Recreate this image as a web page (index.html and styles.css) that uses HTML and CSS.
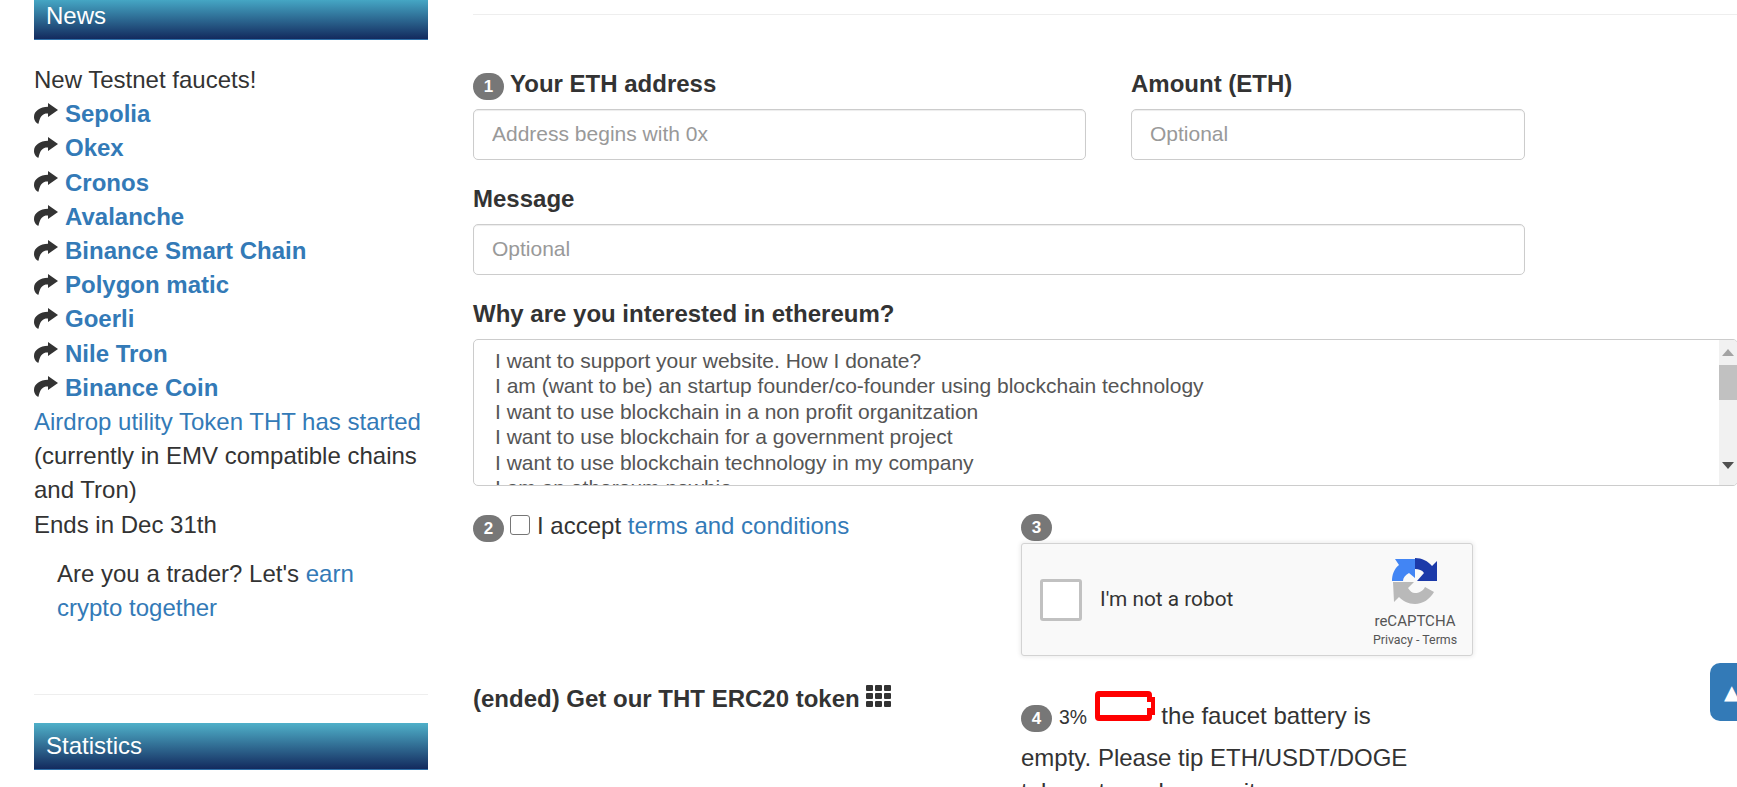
FILE: index.html
```html
<!DOCTYPE html>
<html>
<head>
<meta charset="utf-8" />
<title>Ethereum faucet</title>
<link rel="stylesheet" href="styles.css">
</head>
<body>
<div class="page">
	<div class="side">
		<h3 class="side-title side-title-news">News</h3>
		<div class="news">
			<p>New Testnet faucets!</p>
			<p class="net"><svg class="arrow" viewBox="0 0 24 21"><path d="M14 0 24 7 14 14V10.5C9.5 10.2 6 12.5 4.5 20.8 1.5 20 0 16.5 0 14 0 8 6 4 14 3.8Z"/></svg><a href="#">Sepolia</a></p>
			<p class="net"><svg class="arrow" viewBox="0 0 24 21"><path d="M14 0 24 7 14 14V10.5C9.5 10.2 6 12.5 4.5 20.8 1.5 20 0 16.5 0 14 0 8 6 4 14 3.8Z"/></svg><a href="#">Okex</a></p>
			<p class="net"><svg class="arrow" viewBox="0 0 24 21"><path d="M14 0 24 7 14 14V10.5C9.5 10.2 6 12.5 4.5 20.8 1.5 20 0 16.5 0 14 0 8 6 4 14 3.8Z"/></svg><a href="#">Cronos</a></p>
			<p class="net"><svg class="arrow" viewBox="0 0 24 21"><path d="M14 0 24 7 14 14V10.5C9.5 10.2 6 12.5 4.5 20.8 1.5 20 0 16.5 0 14 0 8 6 4 14 3.8Z"/></svg><a href="#">Avalanche</a></p>
			<p class="net"><svg class="arrow" viewBox="0 0 24 21"><path d="M14 0 24 7 14 14V10.5C9.5 10.2 6 12.5 4.5 20.8 1.5 20 0 16.5 0 14 0 8 6 4 14 3.8Z"/></svg><a href="#">Binance Smart Chain</a></p>
			<p class="net"><svg class="arrow" viewBox="0 0 24 21"><path d="M14 0 24 7 14 14V10.5C9.5 10.2 6 12.5 4.5 20.8 1.5 20 0 16.5 0 14 0 8 6 4 14 3.8Z"/></svg><a href="#">Polygon matic</a></p>
			<p class="net"><svg class="arrow" viewBox="0 0 24 21"><path d="M14 0 24 7 14 14V10.5C9.5 10.2 6 12.5 4.5 20.8 1.5 20 0 16.5 0 14 0 8 6 4 14 3.8Z"/></svg><a href="#">Goerli</a></p>
			<p class="net"><svg class="arrow" viewBox="0 0 24 21"><path d="M14 0 24 7 14 14V10.5C9.5 10.2 6 12.5 4.5 20.8 1.5 20 0 16.5 0 14 0 8 6 4 14 3.8Z"/></svg><a href="#">Nile Tron</a></p>
			<p class="net"><svg class="arrow" viewBox="0 0 24 21"><path d="M14 0 24 7 14 14V10.5C9.5 10.2 6 12.5 4.5 20.8 1.5 20 0 16.5 0 14 0 8 6 4 14 3.8Z"/></svg><a href="#">Binance Coin</a></p>
			<p><a href="#">Airdrop utility Token THT has started</a></p>
			<p>(currently in EMV compatible chains and Tron)</p>
			<p>Ends in Dec 31th</p>
			<p class="trader">Are you a trader? Let's <a href="#">earn crypto together</a></p>
		</div>
		<hr class="side-line">
		<h3 class="side-title">Statistics</h3>
	</div>

	<div class="main">
		<hr class="main-line">
		<div class="row">
			<div class="field field-address">
				<label class="field-label"><span class="badge">1</span>Your ETH address</label>
				<input class="input" type="text" placeholder="Address begins with 0x">
			</div>
			<div class="field field-amount">
				<label class="field-label">Amount (ETH)</label>
				<input class="input" type="text" placeholder="Optional">
			</div>
		</div>
		<div class="field field-message">
			<label class="field-label">Message</label>
			<input class="input" type="text" placeholder="Optional">
		</div>
		<div class="field">
			<label class="field-label">Why are you interested in ethereum?</label>
			<div class="reasons">
				<div class="reasons-list">
					<p>I want to support your website. How I donate?</p>
					<p>I am (want to be) an startup founder/co-founder using blockchain technology</p>
					<p>I want to use blockchain in a non profit organitzation</p>
					<p>I want to use blockchain for a government project</p>
					<p>I want to use blockchain technology in my company</p>
					<p>I am an ethereum newbie</p>
				</div>
				<div class="scrollbar">
					<span class="scroll-up"></span>
					<span class="scroll-thumb"></span>
					<span class="scroll-down"></span>
				</div>
			</div>
		</div>

		<div class="steps">
			<div class="accept">
				<span class="badge">2</span><input class="check" type="checkbox"><span>I accept <a href="#">terms and conditions</a></span>
			</div>
			<div class="captcha-wrap">
				<span class="badge">3</span>
				<div class="captcha">
					<span class="captcha-box"></span>
					<span class="captcha-text">I'm not a robot</span>
					<div class="captcha-brand">
						<svg class="captcha-logo" viewBox="0 0 46 46">
							<path fill="#1c3aa9" d="M23 0C30 0 36 3 40 8L45 3V23H25L32 15C30 12 27 11 23 11Z"/>
							<path fill="#4285f4" d="M0 23C0 17 2 11 7 7L3 1H23V20L17 15C13 17 11 20 11 23Z"/>
							<path fill="#b9b9b9" d="M1 24H22L16 30C18 33 20 35 23 35 27 35 31 33 33 29L42 34C38 41 31 46 23 46 16 46 11 43 7 39L2 44Z"/>
						</svg>
						<span class="captcha-name">reCAPTCHA</span>
						<span class="captcha-links">Privacy - Terms</span>
					</div>
				</div>
			</div>
			<h4 class="token">(ended) Get our THT ERC20 token <svg class="grid-icon" viewBox="0 0 25 22"><rect width="7" height="6" rx="1"/><rect x="9" width="7" height="6" rx="1"/><rect x="18" width="7" height="6" rx="1"/><rect y="8" width="7" height="6" rx="1"/><rect x="9" y="8" width="7" height="6" rx="1"/><rect x="18" y="8" width="7" height="6" rx="1"/><rect y="16" width="7" height="6" rx="1"/><rect x="9" y="16" width="7" height="6" rx="1"/><rect x="18" y="16" width="7" height="6" rx="1"/></svg></h4>
			<div class="battery-text">
				<span class="badge">4</span><span class="percent">3%</span>
				<svg class="battery" viewBox="0 0 60 30"><path fill="#f00" d="M4 0H53Q57 0 57 4V6H60V24H57V26Q57 30 53 30H4Q0 30 0 26V4Q0 0 4 0Z"/><path fill="#fff" d="M5 6H52V11H56V17H52V24H5Z"/></svg>
				the faucet battery is empty. Please tip ETH/USDT/DOGE tokens to make sure it
			</div>
		</div>
	</div>
</div>
<a class="to-top" href="#">▲</a>
</body>
</html>
```

FILE: styles.css
```css
*{margin: 0;padding: 0;box-sizing: border-box;}
html,body {height: 100%;overflow: hidden;background-color: #fff;}
body {font-family: "Liberation Sans",Arial,sans-serif;font-size: 24px;line-height: 34.2px;color: #333;}
a {color: #337ab7;text-decoration: none;}

.page {display: flex;height: 787px;overflow: hidden;padding-left: 34px;}

/* left column */
.side {flex: 0 0 394px;margin-right: 45px;}
.side-title {height: 47px;padding-left: 12px;font-size: 24px;font-weight: normal;line-height: 45px;color: #fff;background: linear-gradient(#4fb0c9,#132a5e);border-bottom: 1px solid #2f6fa8;}
.side-title-news {height: 40px;line-height: 32px;background: linear-gradient(#45a6c4,#132a5e);}
.news {padding-top: 23px;}
.net {display: flex;align-items: center;font-weight: bold;}
.arrow {width: 24px;height: 21px;margin-top: -2px;margin-right: 7px;fill: #333;}
.trader {padding: 15px 20px 0 23px;}
.side-line {height: 1px;margin: 69px 0 28px;border: 0;background-color: #eee;}

/* main column */
.main {flex: 0 0 1264px;}
.main-line {height: 1px;margin: 14px 0 52px;border: 0;background-color: #eee;}
.row {display: flex;gap: 45px;margin-bottom: 22px;}
.field-address {width: 613px;}
.field-amount {width: 394px;}
.field-message {width: 1052px;margin-bottom: 22px;}
.field-label {display: block;height: 34px;margin-bottom: 8px;font-weight: bold;}
.input {display: block;width: 100%;height: 51px;padding: 0 18px 2px;border: 1px solid #ccc;border-radius: 5px;font-family: inherit;font-size: 21px;color: #555;outline: none;box-shadow: inset 0 1px 1px rgba(0,0,0,.075);}
.input::placeholder {color: #999;}

.badge {display: inline-block;width: 31px;height: 27px;margin-right: 6px;border-radius: 14px;background-color: #777;color: #fff;font-size: 17px;font-weight: bold;line-height: 27px;text-align: center;vertical-align: 0;}

.reasons {display: flex;width: 1265px;height: 147px;overflow: hidden;border: 1px solid #ccc;border-radius: 5px;}
.reasons-list {flex: 1;padding: 8px 21px 0;font-size: 21px;line-height: 25.4px;color: #555;overflow: hidden;}
.scrollbar {flex: 0 0 18px;display: flex;flex-direction: column;align-items: center;background-color: #f1f1f1;}
.scroll-up {margin-top: 9px;border-left: 6px solid transparent;border-right: 6px solid transparent;border-bottom: 7px solid #a3a3a3;}
.scroll-thumb {width: 18px;height: 35px;margin-top: 9px;background-color: #c1c1c1;}
.scroll-down {margin-top: 62px;border-left: 6px solid transparent;border-right: 6px solid transparent;border-top: 7px solid #505050;}

.steps {display: grid;grid-template-columns: 548px 400px;padding-top: 23px;}
.accept {display: flex;align-items: flex-start;}
.accept .badge {margin-top: 6px;}
.check {width: 20px;height: 20px;margin: 6px 7px 0 0;appearance: none;border: 1px solid #767676;border-radius: 3px;background-color: #fff;}
.captcha-wrap {padding-top: 5px;}
.captcha-wrap .badge {display: block;}
.captcha {display: flex;align-items: center;width: 452px;height: 113px;margin-top: 2px;padding-left: 18px;border: 1px solid #d3d3d3;border-radius: 3px;background-color: #f9f9f9;box-shadow: 0 0 4px 1px rgba(0,0,0,.08);}
.captcha-box {width: 42px;height: 42px;border: 3px solid #c1c1c1;border-radius: 3px;background-color: #fff;}
.captcha-text {margin-left: 18px;font-family: Roboto,sans-serif;font-size: 20.8px;color: #333;}
.captcha-brand {display: flex;flex-direction: column;align-items: center;width: 90px;margin-left: auto;margin-right: 12px;padding-top: 6px;color: #555;}
.captcha-logo {width: 46px;height: 46px;}
.captcha-name {margin-top: 7px;font-family: Roboto,sans-serif;font-size: 15px;line-height: 20px;}
.captcha-links {font-family: Roboto,sans-serif;font-size: 12.4px;line-height: 17px;white-space: nowrap;}
.token {margin-top: 26px;font-size: 24px;font-weight: bold;line-height: 34px;}
.grid-icon {width: 25px;height: 22px;fill: #333;}
.battery-text {margin-top: 35px;}
.battery-text .badge {margin-bottom: 9px;}
.percent {font-size: 19.4px;margin-left: 1px;}
.battery {width: 60px;height: 30px;margin: 0 0 0 1px;vertical-align: 3px;}

.to-top {position: absolute;left: 1710px;top: 663px;width: 40px;height: 58px;padding-left: 14px;border-radius: 10px;background-color: #337ab7;color: #fff;font-family: "DejaVu Sans",sans-serif;font-size: 20px;line-height: 58px;}
```
